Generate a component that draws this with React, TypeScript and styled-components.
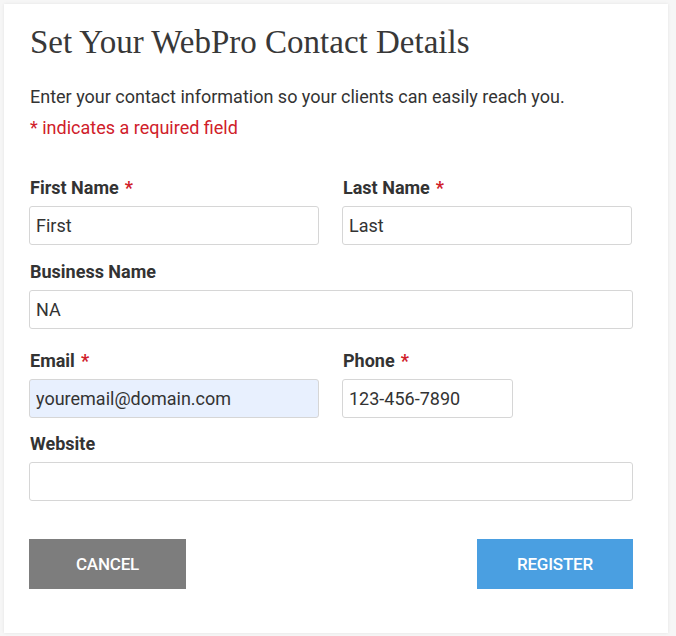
import React from 'react';
import styled, { createGlobalStyle } from 'styled-components';

const GlobalStyle = createGlobalStyle`
  html, body {
    margin: 0;
    padding: 0;
    background: #f6f6f6;
  }
  body {
    font-family: Roboto, "Liberation Sans", Arial, sans-serif;
    color: #333;
  }
  * { box-sizing: border-box; }
`;

const Page = styled.div`
  padding: 4px 8px 4px 4px;
`;

const Card = styled.div`
  width: 664px;
  min-height: 628px;
  background: #fff;
  box-shadow: 0 0 3px rgba(0, 0, 0, 0.08);
  padding: 20px 36px 44px 25px;
`;

const Title = styled.h1`
  margin: 0 0 26px 1px;
  font-family: "Liberation Serif", "Times New Roman", serif;
  font-weight: 400;
  font-size: 33px;
  line-height: 36px;
  color: #383838;
`;

const Intro = styled.p`
  margin: 0 0 9px 1px;
  font-size: 18px;
  line-height: 22px;
  color: #333;
`;

const Required = styled.p`
  margin: 0 0 38px 1px;
  font-size: 18px;
  line-height: 22px;
  color: #d0202a;
`;

const Row = styled.div<{ $gap?: number }>`
  display: grid;
  grid-template-columns: 290px 290px;
  column-gap: 23px;
  margin-bottom: ${p => p.$gap ?? 16}px;
`;

const FullRow = styled.div<{ $gap?: number }>`
  margin-bottom: ${p => p.$gap ?? 16}px;
`;

const Field = styled.div`
  display: flex;
  flex-direction: column;
`;

const Label = styled.label`
  font-weight: 700;
  font-size: 18px;
  line-height: 22px;
  color: #333;
  margin: 0 0 7px 1px;
`;

const Star = styled.span`
  color: #d0202a;
  margin-left: 6px;
`;

const Input = styled.input<{ $width?: number; $filled?: boolean }>`
  width: ${p => (p.$width ? `${p.$width}px` : '100%')};
  height: 39px;
  padding: 0 6px;
  border: 1px solid #d6d6d6;
  border-radius: 3px;
  background: ${p => (p.$filled ? '#e8f0fe' : '#fff')};
  font-family: Roboto, "Liberation Sans", Arial, sans-serif;
  font-size: 18px;
  color: #333;
  outline: none;
`;

const Actions = styled.div`
  display: flex;
  justify-content: space-between;
  width: 604px;
  margin-top: 38px;
`;

const Button = styled.button<{ $variant: 'cancel' | 'primary' }>`
  width: ${p => (p.$variant === 'cancel' ? 157 : 156)}px;
  height: 50px;
  border: none;
  border-radius: 0;
  background: ${p => (p.$variant === 'cancel' ? '#7d7d7d' : '#4a9fe1')};
  color: #fff;
  font-family: Roboto, "Liberation Sans", Arial, sans-serif;
  font-weight: 500;
  font-size: 17px;
  letter-spacing: -0.2px;
  text-transform: uppercase;
  cursor: pointer;
`;

export default function App() {
  return (
    <>
      <GlobalStyle />
      <Page>
        <Card>
          <Title>Set Your WebPro Contact Details</Title>
          <Intro>Enter your contact information so your clients can easily reach you.</Intro>
          <Required>* indicates a required field</Required>

          <Row>
            <Field>
              <Label>First Name<Star>*</Star></Label>
              <Input defaultValue="First" />
            </Field>
            <Field>
              <Label>Last Name<Star>*</Star></Label>
              <Input defaultValue="Last" />
            </Field>
          </Row>

          <FullRow $gap={21}>
            <Field>
              <Label>Business Name</Label>
              <Input defaultValue="NA" $width={604} />
            </Field>
          </FullRow>

          <Row $gap={15}>
            <Field>
              <Label>Email<Star>*</Star></Label>
              <Input defaultValue="youremail@domain.com" $filled />
            </Field>
            <Field>
              <Label>Phone<Star>*</Star></Label>
              <Input defaultValue="123-456-7890" $width={171} />
            </Field>
          </Row>

          <FullRow>
            <Field>
              <Label>Website</Label>
              <Input $width={604} />
            </Field>
          </FullRow>

          <Actions>
            <Button $variant="cancel">Cancel</Button>
            <Button $variant="primary">Register</Button>
          </Actions>
        </Card>
      </Page>
    </>
  );
}
